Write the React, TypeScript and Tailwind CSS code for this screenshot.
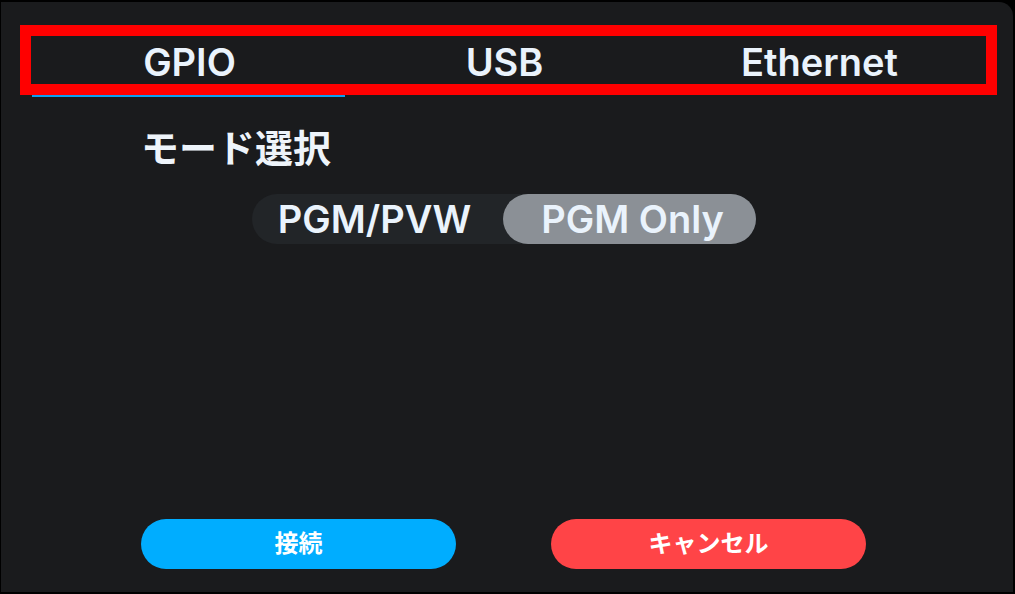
import React from "react";

const font = { fontFamily: 'Inter, "Noto Sans CJK JP", sans-serif' };

export default function App() {
  const tabs = ["GPIO", "USB", "Ethernet"];
  return (
    <div className="relative w-[1015px] h-[594px] bg-black pt-[2px] pl-[1px] pr-[2px] pb-[2px]" style={font}>
      <div className="flex flex-col h-full bg-[#1a1b1d] rounded-tr-[14px]">
        <div className="flex ml-[31px] mt-[23px] w-[945px] h-[72px]">
          {tabs.map((t, i) => (
            <div key={t} className="relative flex-1 flex items-center justify-center">
              <span className="text-[38px] font-semibold text-[#eaf3fc] leading-none pt-[1px]">{t}</span>
              {i === 0 && <div className="absolute left-0 bottom-0 h-[2px] w-[313px] bg-[#0a9ff0]" />}
            </div>
          ))}
        </div>
        <div className="ml-[140px] mt-[29px] text-[38px] font-bold leading-[44px] text-[#eef4fa]">モード選択</div>
        <div className="mt-[24px] ml-[251px] flex w-[504px] h-[50px] rounded-full bg-[#222528]">
          <div className="flex-1 flex items-center justify-center text-[38px] font-semibold text-[#eaf3fc] leading-none pr-[6px]">PGM/PVW</div>
          <div className="w-[253px] flex items-center justify-center rounded-full bg-[#8b9096] text-[38px] font-semibold text-[#eaf3fc] leading-none pl-[6px]">PGM Only</div>
        </div>
        <div className="mt-auto mb-[23px] ml-[140px] flex gap-[95px]">
          <button className="w-[315px] h-[50px] rounded-full bg-[#00adff] text-white text-[24px] font-bold leading-none">接続</button>
          <button className="w-[315px] h-[50px] rounded-full bg-[#ff4447] text-white text-[24px] font-bold leading-none">キャンセル</button>
        </div>
      </div>
      <div className="absolute left-[20px] top-[25px] w-[977px] h-[70px] border-[11px] border-[#ff0000] pointer-events-none" />
    </div>
  );
}
